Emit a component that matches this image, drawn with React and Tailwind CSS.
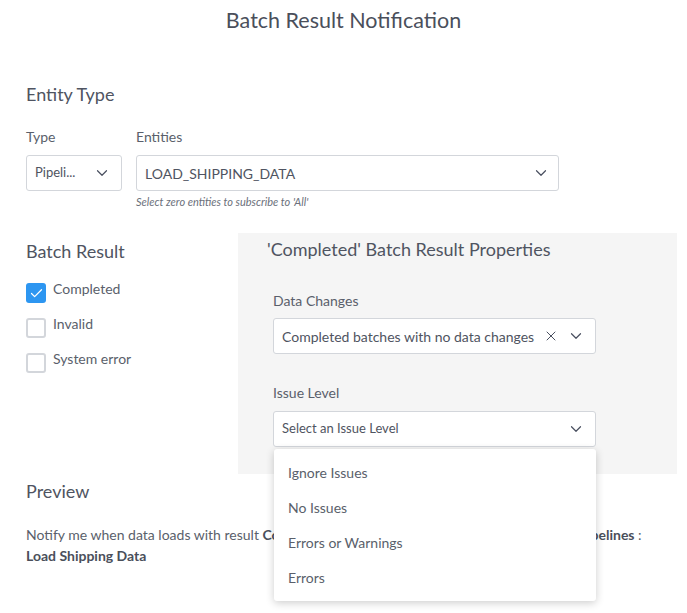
import React from 'react';
import { ChevronDown, X, Check } from 'lucide-react';

const Chevron = () => <ChevronDown size={18} strokeWidth={1.6} className="text-[#4a5060] shrink-0" />;

const CheckRow = ({ label, checked }) => (
  <div className="flex items-start gap-[7px] h-[35px]">
    {checked ? (
      <div className="w-[20px] h-[20px] rounded-[3px] bg-[#2d96f1] flex items-center justify-center mt-[3px]">
        <Check size={15} strokeWidth={2} className="text-white" />
      </div>
    ) : (
      <div className="w-[20px] h-[20px] rounded-[3px] border-2 border-[#d3d6db] bg-white mt-[3px]" />
    )}
    <span className="text-[14px] leading-[18px] text-[#5a5f6b]">{label}</span>
  </div>
);

const App = () => {
  return (
    <div className="w-[687px] h-[613px] bg-white overflow-hidden font-['Lato',sans-serif] text-[#4f5461]">
      <h1 className="text-center text-[21.5px] leading-[28px] pt-[6px] text-[#4a4f5b]">Batch Result Notification</h1>

      <div className="px-[26px]">
        <h2 className="text-[18px] leading-[24px] mt-[48px]">Entity Type</h2>

        <div className="flex gap-[14px] mt-[22px]">
          <div className="flex flex-col">
            <label className="text-[14px] leading-[18px] text-[#5a5f6b]">Type</label>
            <div className="mt-[9px] w-[96px] h-[36px] border border-[#d3d6db] rounded-[3px] flex items-center justify-between pl-[8px] pr-[10px] text-[13px]">
              <span>Pipeli...</span>
              <Chevron />
            </div>
          </div>
          <div className="flex flex-col">
            <label className="text-[14px] leading-[18px] text-[#5a5f6b]">Entities</label>
            <div className="mt-[9px] w-[423px] h-[36px] border border-[#d3d6db] rounded-[3px] flex items-center justify-between pl-[8px] pr-[8px] text-[14px]">
              <span>LOAD_SHIPPING_DATA</span>
              <Chevron />
            </div>
            <span className="italic text-[11px] leading-[14px] mt-[4px] text-[#6b707b]">Select zero entities to subscribe to 'All'</span>
          </div>
        </div>
      </div>

      <div className="flex mt-[24px] pl-[26px] pr-[10px]">
        <div className="w-[212px] pt-[6px]">
          <h2 className="text-[18px] leading-[24px]">Batch Result</h2>
          <div className="mt-[17px] flex flex-col">
            <CheckRow label="Completed" checked />
            <CheckRow label="Invalid" />
            <CheckRow label="System error" />
          </div>
        </div>

        <div className="flex-1 h-[241px] bg-[#f5f5f5] pt-[4px]">
          <h2 className="text-[18px] leading-[24px] pl-[29px]">'Completed' Batch Result Properties</h2>
          <div className="pl-[35px] w-[358px]">
            <label className="block text-[14px] leading-[18px] mt-[31px] text-[#5a5f6b]">Data Changes</label>
            <div className="mt-[8px] h-[36px] bg-white border border-[#d3d6db] rounded-[3px] flex items-center pl-[8px] pr-[10px] text-[14px]">
              <span className="flex-1">Completed batches with no data changes</span>
              <X size={16} strokeWidth={1.5} className="text-[#4a5060] mr-[8px]" />
              <Chevron />
            </div>

            <label className="block text-[14px] leading-[18px] mt-[30px] text-[#5a5f6b]">Issue Level</label>
            <div className="relative mt-[9px]">
              <div className="h-[36px] bg-white border border-[#d3d6db] rounded-[3px] flex items-center justify-between pl-[8px] pr-[10px] text-[13px]">
                <span>Select an Issue Level</span>
                <Chevron />
              </div>
              <div className="absolute left-[1px] right-0 top-[38px] z-10 bg-white rounded-[3px] shadow-[0_2px_8px_rgba(0,0,0,0.2)] py-[6px]">
                {['Ignore Issues', 'No Issues', 'Errors or Warnings', 'Errors'].map((o) => (
                  <div key={o} className="h-[35px] flex items-center pl-[14px] text-[14px] text-[#5a5f6b]">{o}</div>
                ))}
              </div>
            </div>
          </div>
        </div>
      </div>

      <div className="px-[26px] mt-[5px]">
        <h2 className="text-[18px] leading-[24px]">Preview</h2>
        <p className="text-[14px] leading-[21px] mt-[21px] text-[#5a5f6b]">
          Notify me when data loads with result <b className="text-[#4a4f5b]">Completed</b> for all batches with no data changes for <b className="text-[#4a4f5b]">Pipelines</b> :<br />
          <b className="text-[#4a4f5b]">Load Shipping Data</b>
        </p>
      </div>
    </div>
  );
};

export default App;
